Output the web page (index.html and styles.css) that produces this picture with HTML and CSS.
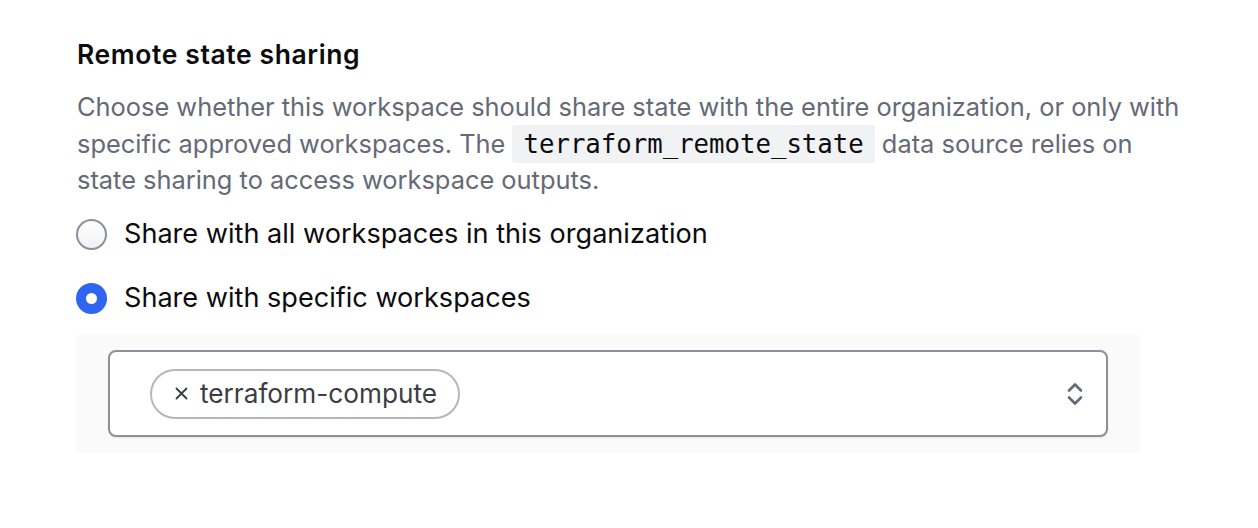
FILE: index.html
```html
<!DOCTYPE html>
<html lang="en">
<head>
<meta charset="utf-8">
<title>Remote state sharing</title>
<link rel="stylesheet" href="styles.css">
</head>
<body>
<section class="section">
  <h2 class="title">Remote state sharing</h2>
  <p class="desc">Choose whether this workspace should share state with the entire organization, or only with specific approved workspaces. The <code class="code">terraform_remote_state</code> data source relies on state sharing to access workspace outputs.</p>
  <div class="options">
    <label class="option">
      <span class="radio"></span>
      <span class="option-label">Share with all workspaces in this organization</span>
    </label>
    <label class="option">
      <span class="radio radio-checked"></span>
      <span class="option-label">Share with specific workspaces</span>
    </label>
  </div>
  <div class="panel">
    <div class="select">
      <div class="tags">
        <span class="tag"><svg class="tag-x" width="13" height="13" viewBox="0 0 13 13" fill="none" stroke="#3b3d45" stroke-width="1.8" stroke-linecap="round"><path d="M1.5 1.5 L11.5 11.5 M11.5 1.5 L1.5 11.5"/></svg>terraform-compute</span>
      </div>
      <svg class="chevron" width="18" height="26" viewBox="0 0 18 26" fill="none" stroke="#656a76" stroke-width="2.6" stroke-linecap="round" stroke-linejoin="round">
        <path d="M3 9.5 L9 3.5 L15 9.5"/>
        <path d="M3 16.5 L9 22.5 L15 16.5"/>
      </svg>
    </div>
  </div>
</section>
</body>
</html>
```
FILE: styles.css
```css
* { box-sizing: border-box; }
html, body { margin: 0; padding: 0; background: #fff; }
body {
  font-family: Inter, "Noto Sans", "Liberation Sans", sans-serif;
  color: #0c0c0e;
}
.section {
  padding: 36px 0 0 77px;
  width: 1220px;
}
.title {
  margin: 0;
  font-size: 26.5px;
  line-height: 36px;
  font-weight: 600;
  letter-spacing: 0.6px;
  color: #0c0c0e;
}
.desc {
  margin: 17px 0 0;
  font-size: 25.4px;
  line-height: 36.7px;
  color: #656a76;
  width: 1116px;
}
.code {
  font-family: "DejaVu Sans Mono", "Liberation Mono", monospace;
  font-size: 25.7px;
  color: #0c0c0e;
  background: #f1f2f3;
  padding: 4px 11px;
  border-radius: 3px;
}
.options {
  display: flex;
  flex-direction: column;
  gap: 28px;
  margin-top: 17px;
}
.option {
  display: flex;
  align-items: center;
  gap: 17px;
  font-size: 27.1px;
  line-height: 36px;
  color: #0c0c0e;
}
.radio {
  width: 31px;
  height: 31px;
  margin-left: -1px;
  border-radius: 50%;
  border: 2px solid #8c909c;
  background: linear-gradient(#ffffff, #f1f1f3);
  flex: none;
}
.radio-checked {
  border: none;
  background: #2f65f0;
  position: relative;
}
.radio-checked::after {
  content: "";
  position: absolute;
  left: 50%; top: 50%;
  width: 11px; height: 11px;
  margin: -5.5px 0 0 -5.5px;
  border-radius: 50%;
  background: #fff;
}
.panel {
  margin-top: 18px;
  width: 1064px;
  margin-left: -1px;
  background: #fafafa;
  padding: 16px 32px;
  border-radius: 4px;
}
.select {
  display: flex;
  align-items: center;
  justify-content: space-between;
  height: 87px;
  border: 2px solid #8c909c;
  border-radius: 8px;
  background: #fff;
  padding: 0 22px 0 40px;
  box-shadow: 0 1px 2px rgba(0,0,0,0.08);
}
.tag {
  display: inline-flex;
  align-items: center;
  height: 50px;
  padding: 0 21px 0 23px;
  border: 2px solid #b4b7bd;
  border-radius: 25px;
  font-size: 26.2px;
  color: #3b3d45;
}
.tag-x {
  display: block;
  margin-right: 12px;
  flex: none;
}
.chevron { display: block; }
```
